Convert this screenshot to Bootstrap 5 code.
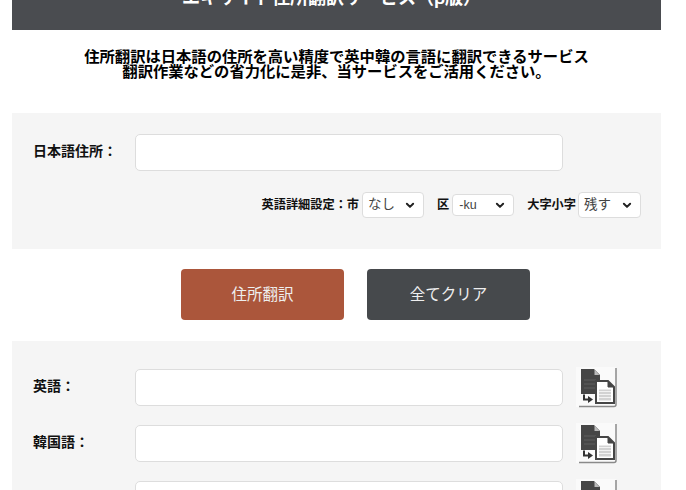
<!DOCTYPE html>
<html lang="ja">
<head>
<meta charset="utf-8">
<title>エキサイト住所翻訳サービス</title>
<link href="https://cdn.jsdelivr.net/npm/bootstrap@5.3.0/dist/css/bootstrap.min.css" rel="stylesheet">
<style>
html, body { height: 490px; overflow: hidden; background: #fff; }
body { font-family: "Liberation Sans", "Noto Sans CJK JP", sans-serif; color: #111; }
.page-wrap { width: 649px; margin-left: 12px; }
.title-bar { height: 30px; background: #4a4c50; color: #fff; overflow: hidden; font-size: 18px; font-weight: 700; line-height: 24px; padding-right: 10px; }
.title-bar span { margin-bottom: 20px; }
.intro { margin-top: 19px; height: 64px; font-size: 15.3px; font-weight: 700; line-height: 15px; color: #000; }
.panel { background: #f5f5f5; }
.panel-top { height: 136px; padding: 21px 20px 0; }
.field-label { width: 103px; flex: none; padding-left: 1px; font-size: 14px; font-weight: 700; margin-top: -2px; }
.field-input { width: 428px; height: 37px; flex: none; border: 1px solid #ddd; border-radius: 5px; background: #fff; }
.options { margin-top: 21px; height: 26px; font-size: 12.200px; font-weight: 700; }
.opt-select { height: 26px; padding: 0 0 0 5px; border: 1px solid #ddd; border-radius: 4px; background-color: #fff; background-image: url("data:image/svg+xml,%3csvg xmlns='http://www.w3.org/2000/svg' viewBox='0 0 16 16'%3e%3cpath fill='none' stroke='%23222' stroke-linecap='round' stroke-linejoin='round' stroke-width='3.200' d='M3 6l5 5 5-5'/%3e%3c/svg%3e"); background-position: right 8px center; background-size: 10px; font-size: 13.500px; font-weight: 400; color: #444; line-height: 24px; }
.sel-a { width: 62px; margin-right: 13px; margin-left: 3px; }
.sel-b { width: 62px; margin-right: 13px; margin-left: 3px; height: 22px; line-height: 20px; font-size: 12.500px; padding-left: 6px; }
.sel-c { width: 63px; margin-left: 2px; }
.actions { height: 92px; padding: 20px 0 21px 38px; gap: 23px; }
.act-btn { width: 163px; height: 51px; border: 0; border-radius: 4px; color: #eee; font-size: 15.500px; padding: 0; }
.act-primary, .act-primary:hover { background: #ab563b; color: #eee; }
.act-dark, .act-dark:hover { background: #46494c; color: #eee; }
.panel-bottom { padding: 28px 20px 0; height: 220px; }
.result-row { height: 37px; margin-bottom: 19px; }
.copy-icon { display: block; flex: none; width: 41px; height: 41px; margin-left: 13px; }
</style>
</head>
<body>
<div class="page-wrap">
  <div class="title-bar d-flex justify-content-center align-items-end text-center">
    <span>エキサイト住所翻訳サービス（β版）</span>
  </div>
  <p class="intro text-center mb-0">住所翻訳は日本語の住所を高い精度で英中韓の言語に翻訳できるサービス<br>翻訳作業などの省力化に是非、当サービスをご活用ください。</p>

  <section class="panel panel-top">
    <div class="d-flex align-items-center">
      <label class="field-label" for="src">日本語住所：</label>
      <input id="src" class="field-input form-control" type="text">
    </div>
    <div class="options d-flex justify-content-end align-items-center">
      <span>英語詳細設定：市</span>
      <select class="form-select opt-select sel-a"><option>なし</option></select>
      <span>区</span>
      <select class="form-select opt-select sel-b"><option>-ku</option></select>
      <span>大字小字</span>
      <select class="form-select opt-select sel-c"><option>残す</option></select>
    </div>
  </section>

  <div class="actions d-flex justify-content-center">
    <button class="btn act-btn act-primary" type="button">住所翻訳</button>
    <button class="btn act-btn act-dark" type="button">全てクリア</button>
  </div>

  <section class="panel panel-bottom">
    <div class="result-row d-flex align-items-center">
      <label class="field-label" for="en">英語：</label>
      <input id="en" class="field-input form-control" type="text">
      <svg class="copy-icon" viewBox="0 0 41 41" aria-hidden="true"><use href="#copy"/></svg>
    </div>
    <div class="result-row d-flex align-items-center">
      <label class="field-label" for="ko">韓国語：</label>
      <input id="ko" class="field-input form-control" type="text">
      <svg class="copy-icon" viewBox="0 0 41 41" aria-hidden="true"><use href="#copy"/></svg>
    </div>
    <div class="result-row d-flex align-items-center">
      <label class="field-label" for="zh">中国語：</label>
      <input id="zh" class="field-input form-control" type="text">
      <svg class="copy-icon" viewBox="0 0 41 41" aria-hidden="true"><use href="#copy"/></svg>
    </div>
  </section>
</div>
<svg width="0" height="0" class="d-block" aria-hidden="true">
  <defs>
    <g id="copy">
      <rect x="0" y="0" width="40" height="40" fill="#fafafa"/>
      <path d="M3 39.500H38Q40 39.500 40 37.500V1" fill="none" stroke="#8a8a8a" stroke-width="1.500"/>
      <path d="M5 2H18L24 8V27H5Z" fill="#464646"/>
      <path d="M18.500 2.500V8H23.500Z" fill="#bbb"/>
      <path d="M8 13H20M8 17H20M8 21H20" stroke="#5e5e5e" stroke-width="1"/>
      <path d="M20 14H32L38 20V36H20Z" fill="#fff" stroke="#464646" stroke-width="2"/>
      <path d="M32 14V20H38Z" fill="#464646" stroke="#464646" stroke-width="1"/>
      <path d="M23 22.500H35V33.500H23Z" fill="#d2d2d2"/>
      <path d="M23 24.500H35M23 27.500H35M23 30.500H35" stroke="#f2f2f2" stroke-width="1"/>
      <path d="M8 27.500V32.500H13" fill="none" stroke="#333" stroke-width="2"/>
      <path d="M12 29L17 32.500L12 36Z" fill="#333"/>
    </g>
  </defs>
</svg>
<script src="https://cdn.jsdelivr.net/npm/bootstrap@5.3.0/dist/js/bootstrap.bundle.min.js"></script>
</body>
</html>
